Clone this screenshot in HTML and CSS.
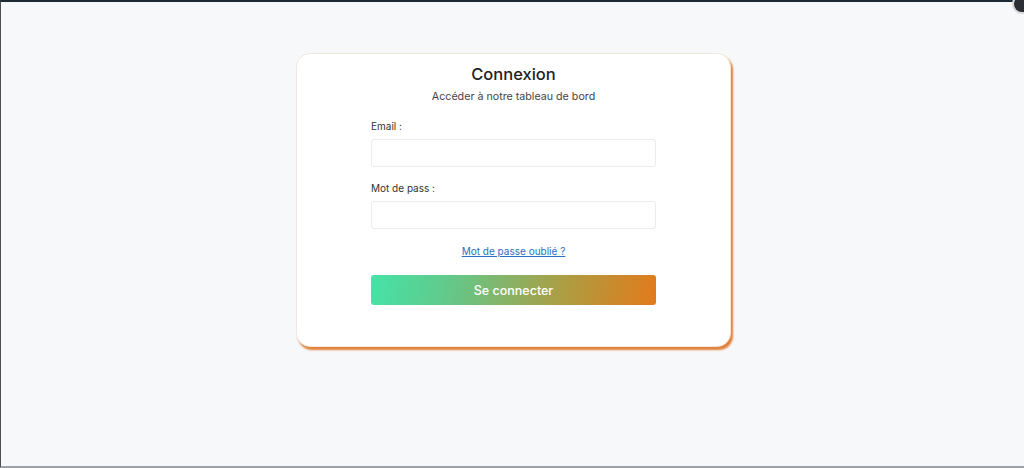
FILE: index.html
```html
<!DOCTYPE html>
<html lang="fr">
  <head>
    <meta charset="UTF-8" />
    <meta name="viewport" content="width=device-width, initial-scale=1.0" />
    <title>Connexion</title>
    <link rel="stylesheet" href="styles.css">
  </head>
  <body>
    <div class="frame">
      <span class="corner-badge"></span>
      <div class="login-card">
        <h1>Connexion</h1>
        <p class="subtitle">Accéder à notre tableau de bord</p>

        <form class="login-form" onsubmit="return false">
          <label for="email">Email :</label>
          <input type="email" id="email" />

          <label for="password">Mot de pass :</label>
          <input type="password" id="password" />

          <a href="#" class="forgot">Mot de passe oublié ?</a>

          <button type="submit">Se connecter</button>
        </form>
      </div>
    </div>
  </body>
</html>
```

FILE: styles.css
```css
html,
body {
  margin: 0;
  padding: 0;
}
body {
  font-family: Inter, "Noto Sans", sans-serif;
  background: #f7f8f9;
}
.frame {
  position: relative;
  box-sizing: border-box;
  height: 468px;
  padding-top: 51px;
  border-top: 2px solid #1d2935;
  border-left: 1px solid #4a4f55;
  border-bottom: 2px solid #9ea2a6;
}
.corner-badge {
  position: absolute;
  top: -8px;
  right: -8px;
  width: 16px;
  height: 16px;
  border-radius: 50%;
  background: #2b2f33;
  border: 2px solid #d8d8d8;
}
.login-card {
  box-sizing: border-box;
  width: 435px;
  height: 294px;
  margin-left: 295px;
  padding: 10px 74px 0;
  background: #fff;
  border: 1px solid #f3e6da;
  border-radius: 14px;
  box-shadow: 2px 3px 2px #e2823a;
  text-align: center;
}
h1 {
  margin: 0;
  font-size: 16.5px;
  font-weight: 500;
  color: #222;
  line-height: 20px;
}
.subtitle {
  margin: 5px 0 0;
  font-size: 10.7px;
  color: #444;
  line-height: 16px;
}
.login-form {
  display: flex;
  flex-direction: column;
  text-align: left;
  margin-top: 14px;
}
label {
  font-size: 10px;
  color: #333;
  line-height: 14px;
  margin-bottom: 6px;
}
input {
  box-sizing: border-box;
  height: 28px;
  border: 1px solid #ececec;
  border-radius: 3px;
  background: #fff;
  margin-bottom: 14px;
  padding: 0 8px;
}
.forgot {
  align-self: center;
  font-size: 10px;
  color: #2a6fc0;
  line-height: 14px;
  margin-top: 1px;
}
button {
  margin-top: 17px;
  height: 30px;
  border: none;
  border-radius: 3px;
  background: linear-gradient(100deg, #45e3a8 0%, #66c687 30%, #b29a3e 70%, #e27a1c 100%);
  color: #fff;
  font-family: inherit;
  font-size: 12.5px;
  font-weight: 500;
  cursor: pointer;
}
```
